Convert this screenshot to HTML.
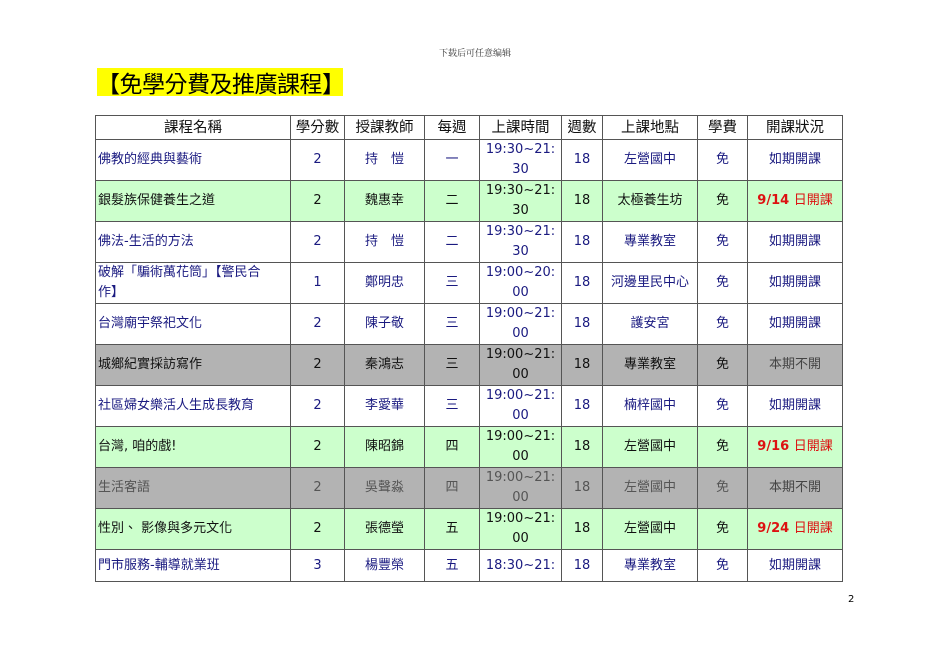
<!DOCTYPE html>
<html><head><meta charset="utf-8"><style>
body{margin:0;width:950px;height:672px;background:#fff;position:relative;font-family:"DejaVu Sans","Liberation Sans","Noto Sans CJK TC",sans-serif;overflow:hidden}
.hd{position:absolute;left:0;width:950px;top:46px;text-align:center;font-size:9px;font-family:"Noto Serif CJK SC",serif;color:#333}
.tt{position:absolute;left:97px;top:68px;width:246px;height:28px;background:#ffff00;font-size:23px;line-height:28px;color:#000;font-family:"Noto Sans CJK TC",sans-serif;white-space:nowrap;letter-spacing:-0.5px}
table{position:absolute;left:95px;top:115px;border-collapse:collapse;table-layout:fixed;font-size:13px}
td{border:1px solid #555;text-align:center;padding:0;line-height:20px;color:#1a1a80;height:40px}
tr.h td{height:23px;color:#111;font-size:14.5px}
td.l{text-align:left;padding-left:2px}
tr.g td{background:#ccffcc;color:#111}
tr.k td{background:#b3b3b3;color:#111}
tr.k2 td{background:#b3b3b3;color:#555}
tr.g td.red{color:#dd1111;font-weight:bold}
.red span{font-weight:normal}
tr.k td.s,tr.k2 td.s{color:#444}
tr.last td{height:31px}
.pn{position:absolute;left:848px;top:594px;font-size:10px}
</style></head><body>
<div class="hd">下载后可任意编辑</div>
<div class="tt">【免學分費及推廣課程】</div>
<table>
<colgroup><col style="width:195px"><col style="width:54px"><col style="width:80px"><col style="width:55px"><col style="width:82px"><col style="width:41px"><col style="width:95px"><col style="width:50px"><col style="width:95px"></colgroup>
<tr class="h"><td>課程名稱</td><td>學分數</td><td>授課教師</td><td>每週</td><td>上課時間</td><td>週數</td><td>上課地點</td><td>學費</td><td>開課狀況</td></tr>
<tr><td class="l">佛教的經典與藝術</td><td>2</td><td>持　愷</td><td>一</td><td>19:30~21:<br>30</td><td>18</td><td>左營國中</td><td>免</td><td>如期開課</td></tr>
<tr class="g"><td class="l">銀髮族保健養生之道</td><td>2</td><td>魏惠幸</td><td>二</td><td>19:30~21:<br>30</td><td>18</td><td>太極養生坊</td><td>免</td><td class="red">9/14 <span>日開課</span></td></tr>
<tr><td class="l">佛法-生活的方法</td><td>2</td><td>持　愷</td><td>二</td><td>19:30~21:<br>30</td><td>18</td><td>專業教室</td><td>免</td><td>如期開課</td></tr>
<tr><td class="l">破解「騙術萬花筒」【警民合<br>作】</td><td>1</td><td>鄭明忠</td><td>三</td><td>19:00~20:<br>00</td><td>18</td><td>河邊里民中心</td><td>免</td><td>如期開課</td></tr>
<tr><td class="l">台灣廟宇祭祀文化</td><td>2</td><td>陳子敬</td><td>三</td><td>19:00~21:<br>00</td><td>18</td><td>護安宮</td><td>免</td><td>如期開課</td></tr>
<tr class="k"><td class="l">城鄉紀實採訪寫作</td><td>2</td><td>秦鴻志</td><td>三</td><td>19:00~21:<br>00</td><td>18</td><td>專業教室</td><td>免</td><td class="s">本期不開</td></tr>
<tr><td class="l">社區婦女樂活人生成長教育</td><td>2</td><td>李愛華</td><td>三</td><td>19:00~21:<br>00</td><td>18</td><td>楠梓國中</td><td>免</td><td>如期開課</td></tr>
<tr class="g"><td class="l">台灣, 咱的戲!</td><td>2</td><td>陳昭錦</td><td>四</td><td>19:00~21:<br>00</td><td>18</td><td>左營國中</td><td>免</td><td class="red">9/16 <span>日開課</span></td></tr>
<tr class="k2"><td class="l">生活客語</td><td>2</td><td>吳聲淼</td><td>四</td><td>19:00~21:<br>00</td><td>18</td><td>左營國中</td><td>免</td><td class="s">本期不開</td></tr>
<tr class="g"><td class="l">性別、 影像與多元文化</td><td>2</td><td>張德瑩</td><td>五</td><td>19:00~21:<br>00</td><td>18</td><td>左營國中</td><td>免</td><td class="red">9/24 <span>日開課</span></td></tr>
<tr class="last"><td class="l">門市服務-輔導就業班</td><td>3</td><td>楊豐榮</td><td>五</td><td>18:30~21:</td><td>18</td><td>專業教室</td><td>免</td><td>如期開課</td></tr>
</table>
<div class="pn">2</div>
</body></html>
